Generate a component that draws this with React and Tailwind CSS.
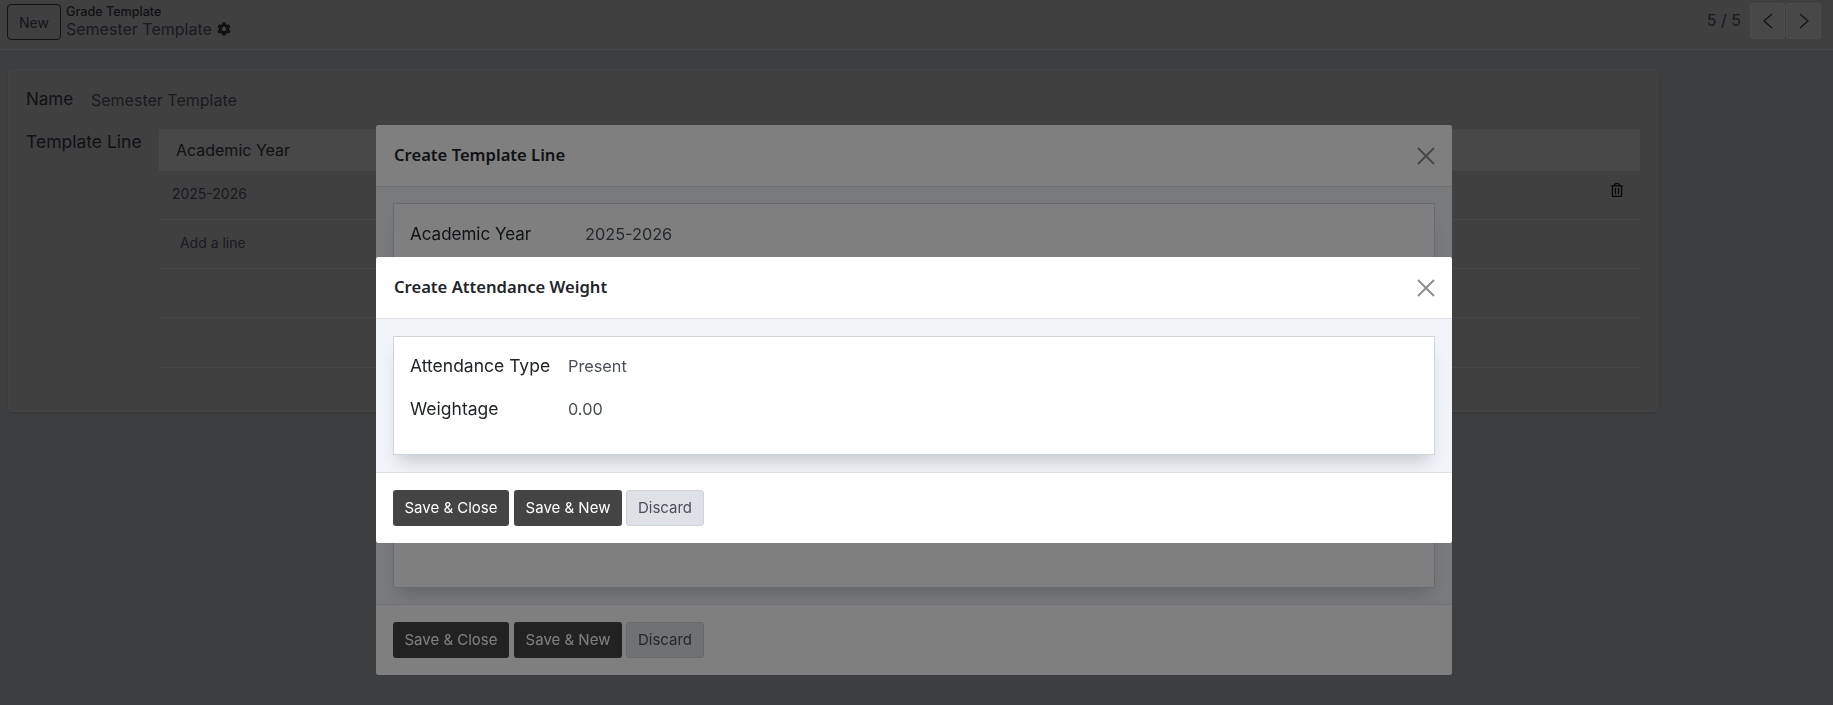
import React from 'react';
import { FaCog, FaRegTrashAlt } from 'react-icons/fa';

const fontBody = { fontFamily: 'Inter, "Noto Sans", sans-serif' };

function CloseIcon() {
  return (
    <svg width="18" height="18" viewBox="0 0 18 18" fill="none" stroke="#8c8c8c" strokeWidth="1.8">
      <path d="M1 1 L17 17 M17 1 L1 17" />
    </svg>
  );
}

function ModalButtons() {
  return (
    <div className="flex items-center h-[71px] px-[17px] border-t border-[#dee2e6] bg-white text-[15px]">
      <button className="w-[116px] h-[36px] rounded-[3px] bg-[#444444] text-white">Save &amp; Close</button>
      <button className="w-[108px] h-[36px] ml-[5px] rounded-[3px] bg-[#444444] text-white">Save &amp; New</button>
      <button className="w-[78px] h-[36px] ml-[4px] rounded-[3px] bg-[#dee2e6] border border-[#ced4da] text-[#495057]">Discard</button>
    </div>
  );
}

function ModalHeader({ title }) {
  return (
    <div className="flex items-center justify-between h-[62px] pl-[18px] pr-[17px] border-b border-[#dee2e6] bg-white">
      <h4 className="text-[16.6px] font-semibold text-[#212529]" style={{ fontFamily: '"Noto Sans", sans-serif' }}>{title}</h4>
      <CloseIcon />
    </div>
  );
}

function Page() {
  return (
    <div className="h-[705px] bg-[#7a7c80] overflow-hidden text-[#212529]" style={fontBody}>
      {/* Control panel */}
      <div className="flex items-start justify-between h-[50px] border-b border-[#8c8c8c] bg-[#808080] pl-[7px] pr-[12px] pt-[4px]">
        <div className="flex items-start gap-[5px]">
          <button className="w-[54px] h-[36px] rounded-[4px] border border-[#2a2a2a] text-[14px] text-[#2a2e33]">New</button>
          <div className="flex flex-col">
            <span className="text-[12.6px] font-medium leading-[15px] text-[#212529]">Grade Template</span>
            <span className="flex items-center gap-[5px] text-[16px] leading-[20px] text-[#33373c]">
              Semester Template <FaCog className="text-[14px] text-[#222222]" />
            </span>
          </div>
        </div>
        <div className="flex items-start">
          <span className="text-[16px] leading-[32px] mr-[9px] text-[#33373c]">5 / 5</span>
          <button className="flex items-center justify-center w-[35px] h-[36px] -mt-px rounded-[3px] bg-[#909090] border border-[#9a9a9a]">
            <svg width="10" height="16" viewBox="0 0 10 16" fill="none" stroke="#212529" strokeWidth="1.3"><path d="M9 1 L1 8 L9 15" /></svg>
          </button>
          <button className="flex items-center justify-center w-[35px] h-[36px] -mt-px ml-px rounded-[3px] bg-[#909090] border border-[#9a9a9a]">
            <svg width="10" height="16" viewBox="0 0 10 16" fill="none" stroke="#212529" strokeWidth="1.3"><path d="M1 1 L9 8 L1 15" /></svg>
          </button>
        </div>
      </div>

      {/* Form sheet */}
      <div className="w-[1650px] h-[343px] ml-[8px] mt-[19px] rounded-[4px] bg-[#808080] border border-[#888888] shadow-sm pl-[17px] pr-[17px] pt-[19px]">
        <div className="flex items-center h-[22px] text-[17px]">
          <span className="w-[65px]">Name</span>
          <span className="text-[#33373c] text-[16px]">Semester Template</span>
        </div>
        <div className="flex mt-[18px]">
          <span className="w-[133px] text-[17.5px] leading-[22px] pt-[2px]">Template Line</span>
          <div className="w-[1482px]">
            <div className="flex items-center h-[42px] pl-[17px] bg-[#909090] text-[16px]">Academic Year</div>
            <div className="flex items-center justify-between h-[49px] pl-[13px] pr-[16px] pb-[4px] border-b border-[#8e8e8e] text-[14px] text-[#33373c]">
              2025-2026
              <FaRegTrashAlt className="text-[14px] text-[#111111] -mt-[6px]" />
            </div>
            <div className="flex items-center h-[49px] pl-[21px] pb-[4px] border-b border-[#8e8e8e] text-[14px] text-[#33373c]">Add a line</div>
            <div className="h-[49px] border-b border-[#8e8e8e]" />
            <div className="h-[50px] border-b border-[#8e8e8e]" />
          </div>
        </div>
      </div>

      {/* First dialog */}
      <div className="fixed left-[376px] top-[125px] w-[1076px] h-[550px] rounded-[3px] overflow-hidden flex flex-col bg-[#f0f4f8]">
        <ModalHeader title="Create Template Line" />
        <div className="flex-1 px-[17px] pt-[16px]">
          <div className="h-[385px] bg-white border border-[#ced4da] shadow-[0_12px_16px_-6px_rgba(0,0,0,0.18)] pl-[16px] pt-[18px] flex items-start text-[17px] text-[#212529]">
            <span className="w-[175px]">Academic Year</span>
            <span className="text-[16.3px] text-[#495057]">2025-2026</span>
          </div>
        </div>
        <ModalButtons />
      </div>
    </div>
  );
}

export default function App() {
  return (
    <div className="relative h-[705px] overflow-hidden" style={fontBody}>
      <Page />

      {/* Second dialog */}
      <div className="absolute inset-0 bg-black/50 flex items-start pt-[257px] pl-[376px]">
        <div className="w-[1076px] h-[286px] rounded-[3px] overflow-hidden flex flex-col bg-[#f0f4f8]">
          <ModalHeader title="Create Attendance Weight" />
          <div className="flex-1 px-[17px] pt-[17px]">
            <div className="h-[119px] bg-white border border-[#ced4da] shadow-[0_12px_16px_-6px_rgba(0,0,0,0.18)] pl-[16px] pt-[18px] text-[#212529]">
              <div className="flex items-center h-[22px] text-[17.5px]">
                <span className="w-[158px]">Attendance Type</span>
                <span className="text-[16.3px] text-[#495057]">Present</span>
              </div>
              <div className="flex items-center h-[22px] mt-[21px] text-[17.5px]">
                <span className="w-[158px]">Weightage</span>
                <span className="text-[16.3px] text-[#495057]">0.00</span>
              </div>
            </div>
          </div>
          <ModalButtons />
        </div>
      </div>
    </div>
  );
}
